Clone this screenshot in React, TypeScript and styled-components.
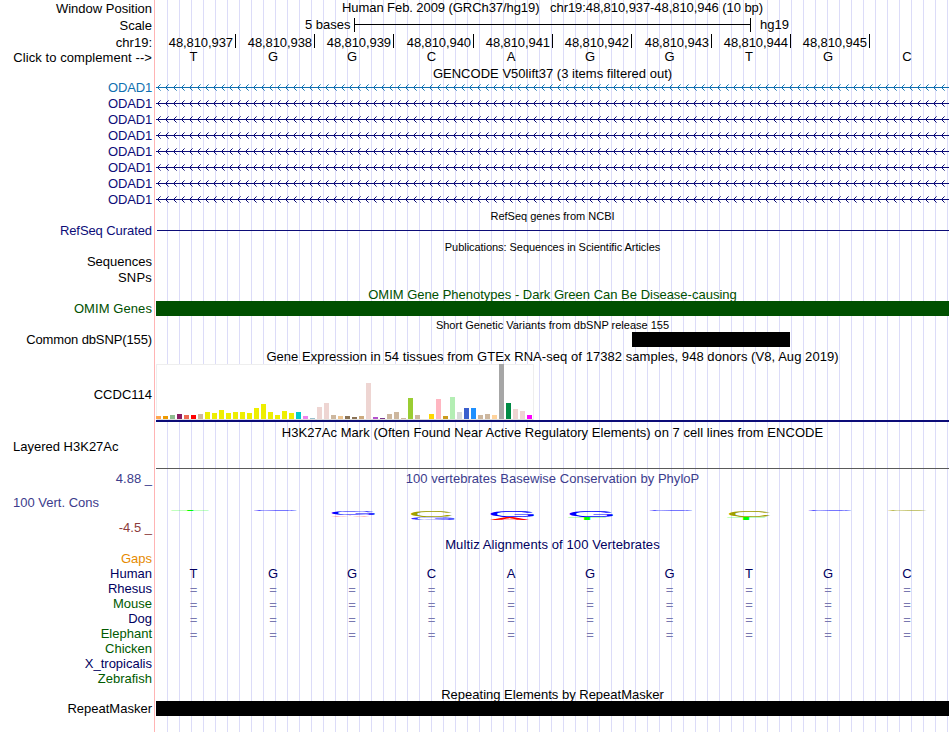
import React from 'react'
import styled, { createGlobalStyle } from 'styled-components'

const BASES = ['T', 'G', 'G', 'C', 'A', 'G', 'G', 'T', 'G', 'C']
const POSITIONS = [
  '48,810,937', '48,810,938', '48,810,939', '48,810,940', '48,810,941',
  '48,810,942', '48,810,943', '48,810,944', '48,810,945',
]

const NAVY = '#0c0c78'
const GREEN = '#005000'
const TRANSCRIPTS = ['#1070b0', NAVY, NAVY, NAVY, NAVY, NAVY, NAVY, NAVY]

const SPECIES = [
  { name: 'Rhesus', color: '#000060', aligned: true },
  { name: 'Mouse', color: '#005a00', aligned: true },
  { name: 'Dog', color: '#000060', aligned: true },
  { name: 'Elephant', color: '#005a00', aligned: true },
  { name: 'Chicken', color: '#005a00', aligned: false },
  { name: 'X_tropicalis', color: '#000060', aligned: false },
  { name: 'Zebrafish', color: '#005a00', aligned: false },
]

// [height, color] for every tissue
const TISSUES: [number, string][] = [
  [3, '#ffa54f'], [3, '#ee9a00'], [4, '#8fbc8f'], [5, '#8b1c62'], [4, '#ee6a50'], [4, '#ff0000'],
  [5, '#cdb79e'], [7, '#eeee00'], [6, '#eeee00'], [9, '#eeee00'], [6, '#eeee00'], [7, '#eeee00'],
  [7, '#eeee00'], [6, '#eeee00'], [11, '#eeee00'], [15, '#eeee00'], [7, '#eeee00'], [4, '#eeee00'],
  [8, '#eeee00'], [6, '#eeee00'], [7, '#00cdcd'], [3, '#ee82ee'], [1, '#9ac0cd'], [12, '#eed5d2'],
  [16, '#eed5d2'], [4, '#cdb79e'], [3, '#eec591'], [3, '#8b7355'], [2, '#8b7355'], [3, '#cdaa7d'],
  [36, '#eed5d2'], [2, '#b452cd'], [1, '#7a378b'], [5, '#cdb79e'], [7, '#cdb79e'], [1, '#cdb79e'],
  [21, '#9acd32'], [4, '#cdb79e'], [0, '#7a67ee'], [5, '#ffd700'], [20, '#ffb6c1'], [3, '#cd9b1d'],
  [22, '#b4eeb4'], [7, '#d9d9d9'], [11, '#3a5fcd'], [11, '#1e90ff'], [4, '#cdb79e'], [5, '#cdb79e'],
  [4, '#ffd39b'], [55, '#a6a6a6'], [16, '#008b45'], [10, '#eed5d2'], [8, '#eed5d2'], [4, '#ff00ff'],
]

// ink box of each capital at font-size 100: left, right, height above baseline
const INK: Record<string, [number, number, number]> = {
  A: [0.5, 66, 69],
  C: [5, 68, 70],
  G: [5, 71, 70],
  T: [2, 59, 69],
}
const LOGO_COLORS: Record<string, string> = { A: '#ff0000', C: '#a0a000', G: '#0000ff', T: '#00ff00' }

// [letter, x, y, width, height]
const LOGO: [string, number, number, number, number, string?][] = [
  ['T', 15, 10, 38, 1],
  ['G', 97.5, 10, 43, 1],
  ['G', 175.5, 10.8, 43.5, 4.4], ['A', 175, 15.4, 39, 1.4, '#ff4040'],
  ['C', 255, 10.8, 41, 6.4], ['G', 255, 17, 43.5, 3, '#3030ff'],
  ['G', 334.5, 10.8, 43.5, 6.4], ['A', 334, 17, 39, 3],
  ['G', 413.5, 10.8, 43.5, 6.4], ['T', 412, 17, 38, 3],
  ['G', 493, 10, 43, 1],
  ['C', 573, 10.8, 41, 6.4], ['T', 571, 17, 38, 3],
  ['G', 652, 10, 43, 1],
  ['C', 731.5, 10, 39, 1],
]

function Strand ({ color, id }: { color: string, id: string }) {
  return (
    <StrandSvg width="793" height="16" shapeRendering="crispEdges">
      <defs>
        <pattern id={id} width="8" height="16" patternUnits="userSpaceOnUse">
          <path fill={color} d="M1 7h1v1h-1zM2 6h1v1h-1zM2 8h1v1h-1zM3 5h1v1h-1zM3 9h1v1h-1z" />
          <path fill={color} opacity="0.6" d="M4 4h1v1h-1zM4 10h1v1h-1z" />
        </pattern>
      </defs>
      <rect width="793" height="16" fill={`url(#${id})`} />
      <rect y="7" width="793" height="1" fill={color} />
    </StrandSvg>
  )
}

function ConservationLogo () {
  return (
    <LogoSvg width="793" height="50">
      {LOGO.map(([letter, x, y, width, height, color], i) => {
        const [left, right, cap] = INK[letter]
        const sx = width / (right - left)
        const sy = height / cap
        return (
          <text
            key={i}
            fontSize="100"
            fill={color || LOGO_COLORS[letter]}
            transform={`matrix(${sx} 0 0 ${sy} ${x - left * sx} ${y + height})`}
          >
            {letter}
          </text>
        )
      })}
    </LogoSvg>
  )
}

export default function App () {
  return (
    <Browser>
      <GlobalStyle />

      <Row height={16}>
        <Label low>Window Position</Label>
        <Title tracking={-0.07}>{'Human Feb. 2009 (GRCh37/hg19)   chr19:48,810,937-48,810,946 (10 bp)'}</Title>
      </Row>
      <Row height={18}>
        <Label low>Scale</Label>
        <ScaleTrack>
          <span>5 bases</span>
          <ScaleBar />
          <span>hg19</span>
        </ScaleTrack>
      </Row>
      <Row height={15}>
        <Label low>chr19:</Label>
        <Columns>
          {POSITIONS.map(position => <Position key={position}>{position}</Position>)}
        </Columns>
      </Row>
      <Row height={16}>
        <Label low tracking={0.08}>Click to complement --&gt;</Label>
        <Columns>
          {BASES.map((base, i) => <Base key={i}>{base}</Base>)}
        </Columns>
      </Row>

      <Row height={15}>
        <Label />
        <Title low tracking={0.02}>GENCODE V50lift37 (3 items filtered out)</Title>
      </Row>
      {TRANSCRIPTS.map((color, i) => (
        <Row height={16} key={i}>
          <Label color={color} tracking={-0.15}>ODAD1</Label>
          <Strand color={color} id={`strand${i}`} />
        </Row>
      ))}

      <Row height={15}>
        <Label />
        <Title small>RefSeq genes from NCBI</Title>
      </Row>
      <Row height={16}>
        <Label color={NAVY} tracking={-0.08}>RefSeq Curated</Label>
        <Intron />
      </Row>

      <Row height={15}>
        <Label />
        <Title small tracking={-0.05}>Publications: Sequences in Scientific Articles</Title>
      </Row>
      <Row height={16}><Label>Sequences</Label></Row>
      <Row height={16}><Label tracking={0.2}>SNPs</Label></Row>

      <Row height={15}>
        <Label />
        <Title low color={GREEN}>OMIM Gene Phenotypes - Dark Green Can Be Disease-causing</Title>
      </Row>
      <Row height={16}>
        <Label color={GREEN} tracking={0.08}>OMIM Genes</Label>
        <Block color={GREEN} />
      </Row>

      <Row height={15}>
        <Label />
        <Title small>Short Genetic Variants from dbSNP release 155</Title>
      </Row>
      <Row height={16}>
        <Label tracking={-0.12}>Common dbSNP(155)</Label>
        <Block color="#000" start={476} width={158} />
      </Row>

      <Row height={16}>
        <Label />
        <Title low tracking={0.055}>
          Gene Expression in 54 tissues from GTEx RNA-seq of 17382 samples, 948 donors (V8, Aug 2019)
        </Title>
      </Row>
      <Row height={61}>
        <Label>CCDC114</Label>
        <Expression>
          <Tissues>
            {TISSUES.map(([height, color], i) => <Tissue key={i} color={color} style={{ height }} />)}
          </Tissues>
        </Expression>
      </Row>

      <Row height={15}>
        <Label />
        <Title tracking={0.045}>
          H3K27Ac Mark (Often Found Near Active Regulatory Elements) on 7 cell lines from ENCODE
        </Title>
      </Row>
      <Row height={31}>
        <LayeredLabel>Layered H3K27Ac</LayeredLabel>
        <Baseline />
      </Row>

      <Row height={15}>
        <Label color="#3c3c8c">4.88 _</Label>
        <Title color="#3c3c8c" tracking={0.035}>100 vertebrates Basewise Conservation by PhyloP</Title>
      </Row>
      <Row height={51}>
        <ConservationLabels>
          <span>100 Vert. Cons</span>
          <Minimum>-4.5 _</Minimum>
        </ConservationLabels>
        <ConservationTrack><ConservationLogo /></ConservationTrack>
      </Row>

      <Row height={14}>
        <Label />
        <Title color="#000060" tracking={0.1}>Multiz Alignments of 100 Vertebrates</Title>
      </Row>
      <Row height={15}><Label color="#e68a00">Gaps</Label></Row>
      <Row height={15}>
        <Label color="#000060">Human</Label>
        <Columns>
          {BASES.map((base, i) => <Base color="#000060" key={i}>{base}</Base>)}
        </Columns>
      </Row>
      {SPECIES.map(({ name, color, aligned }) => (
        <Row height={15} key={name}>
          <Label color={color}>{name}</Label>
          {aligned && (
            <Columns>
              {BASES.map((_, i) => <Base color="#7878b0" key={i}><Match>=</Match></Base>)}
            </Columns>
          )}
        </Row>
      ))}

      <Row height={15}>
        <Label />
        <Title low>Repeating Elements by RepeatMasker</Title>
      </Row>
      <Row height={16}>
        <Label>RepeatMasker</Label>
        <Block color="#000" />
      </Row>
    </Browser>
  )
}

const GlobalStyle = createGlobalStyle`
  body {
    margin: 0;
    background: #fff;
  }
`

const Browser = styled.div`
  box-sizing: border-box;
  width: 949px;
  height: 732px;
  overflow: hidden;
  font: 13px/16px 'Liberation Sans', Arial, sans-serif;
  color: #000;
  background:
    linear-gradient(#ffb4b4, #ffb4b4) 154px 0 / 1px 100% no-repeat,
    repeating-linear-gradient(90deg, #dcdcf8 0 1px, transparent 1px 12px) 167px 0 no-repeat;
`

const Row = styled.div<{ height: number }>`
  display: grid;
  grid-template-columns: 156px 793px;
  height: ${({ height }) => height}px;
`

const Label = styled.div<{ low?: boolean, tracking?: number }>`
  display: flex;
  align-items: center;
  justify-content: flex-end;
  padding: ${({ low }) => low ? 1 : 0}px 4px 0 0;
  color: ${({ color }) => color || '#000'};
  letter-spacing: ${({ tracking }) => tracking || 0}px;
  white-space: nowrap;
`

const Title = styled.div<{ small?: boolean, low?: boolean, tracking?: number }>`
  display: flex;
  align-self: start;
  justify-content: center;
  padding-top: ${({ low }) => low ? 1 : 0}px;
  white-space: pre;
  color: ${({ color }) => color || '#000'};
  font-size: ${({ small }) => small ? 11 : 13}px;
  letter-spacing: ${({ tracking }) => tracking || 0}px;
`

const ScaleTrack = styled.div`
  display: flex;
  align-items: center;
  padding-left: 149px;
`

const ScaleBar = styled.div`
  width: 395px;
  height: 14px;
  margin: 0 9px 0 auto;
  border: solid #000;
  border-width: 0 1px;
  background: linear-gradient(#000, #000) 0 6px / 100% 1px no-repeat;

  & + span {
    width: 189px;
  }
`

const Columns = styled.div`
  display: grid;
  grid-template-columns: 80px 79px 79px 80px 79px 79px 80px 79px 79px 79px;
`

const Position = styled.div`
  height: 14px;
  padding-right: 2px;
  border-right: 1px solid #000;
  line-height: 18px;
  text-align: right;
  letter-spacing: -0.08px;
`

const Base = styled.div`
  padding-right: 5px;
  line-height: 15px;
  text-align: center;
  color: ${({ color }) => color || '#000'};
`

const Match = styled.span`
  display: block;
  padding-top: 1px;
`

const StrandSvg = styled.svg`
  display: block;
`

const LogoSvg = styled.svg`
  display: block;
  font-family: 'Liberation Sans', Arial, sans-serif;
`

const Intron = styled.div`
  height: 1px;
  margin: 7px 0 0 1px;
  background: ${NAVY};
`

const Block = styled.div<{ start?: number, width?: number }>`
  height: 15px;
  width: ${({ width }) => width || 793}px;
  margin-left: ${({ start }) => start || 0}px;
  background: ${({ color }) => color};
`

const Expression = styled.div`
  height: 56px;
  border-bottom: 2px solid ${NAVY};
`

const Tissues = styled.div`
  box-sizing: border-box;
  display: flex;
  align-items: flex-end;
  gap: 2px;
  width: 378px;
  height: 56px;
  background:
    linear-gradient(#eee, #eee) 0 0 / 100% 1px no-repeat,
    linear-gradient(#eee, #eee) 0 0 / 1px 100% no-repeat,
    linear-gradient(#eee, #eee) 100% 0 / 1px 100% no-repeat,
    linear-gradient(#ddd, #ddd) 0 100% / 100% 1px no-repeat,
    #fff;
  padding-bottom: 1px;
`

const Tissue = styled.div`
  flex: none;
  width: 5px;
  background: ${({ color }) => color};
`

const LayeredLabel = styled.div`
  padding: 0 0 0 13px;
  line-height: 14px;
`

const Baseline = styled.div`
  height: 1px;
  margin-top: 28px;
  background: #5a5a5a;
`

const ConservationLabels = styled.div`
  display: flex;
  flex-direction: column;
  padding: 9px 4px 0 13px;
  color: #3c3c8c;
`

const Minimum = styled.span`
  margin-top: 9px;
  text-align: right;
  color: #8c3c3c;
`

const ConservationTrack = styled.div`
  padding-top: 14px;
  height: 37px;
  overflow: hidden;
`
